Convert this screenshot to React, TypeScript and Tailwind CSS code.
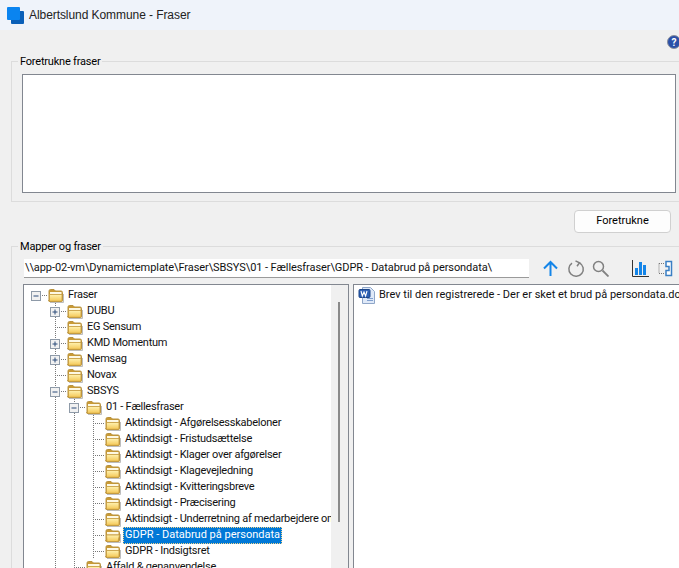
import type { ReactNode } from "react";

function Folder({ open }: { open?: boolean }) {
  return (
    <svg width="16" height="15" viewBox="0 0 16 15" className="shrink-0">
      <defs>
        <linearGradient id="folderFront" x1="0" y1="0" x2="0" y2="1">
          <stop offset="0" stopColor="#fff2b0" />
          <stop offset="1" stopColor="#f4c755" />
        </linearGradient>
      </defs>
      <path d="M2 14.5h13.5V6" fill="none" stroke="#bdbdbd" />
      <path d="M1 12.5V3q0-1.5 1.5-1.5H6L7.5 3H13q1.5 0 1.5 1.5v8q0 1-1 1h-11.5q-1.5 0-1.5-1z" fill="#c99a35" stroke="#b8923f" />
      <rect x="2" y="4" width="11.5" height="2.5" fill="#fdf8e4" />
      <path d={open ? "M1.5 7h13l-1.5 6.5H2z" : "M1.5 6.5h12.5v6q0 .8-.8.8H2.3q-.8 0-.8-.8z"} fill="url(#folderFront)" stroke="#c49a3f" strokeWidth="0.8" />
    </svg>
  );
}

function WordIcon() {
  return (
    <svg width="18" height="17" viewBox="0 0 18 17" className="shrink-0">
      <path d="M4.5 .5h8l4 4v12h-12z" fill="#dfe9f8" stroke="#8fa6c8" />
      <path d="M9 11.5h6M9 13.5h6" stroke="#7f9fcf" />
      <rect x="1" y="2.5" width="11" height="8" rx="1" fill="#2b5fb3" stroke="#1d4689" />
      <path d="M3 4l1.3 5 1.7-4 1.6 4 1.4-5" fill="none" stroke="#fff" strokeWidth="1.1" />
    </svg>
  );
}

function Connector({ guides, expander, branch, stub }: { guides: number[]; expander?: "plus" | "minus"; branch: number; stub: number }) {
  return (
    <svg width={stub} height="16" className="shrink-0">
      {guides.map((x) => (
        <line key={x} x1={x + 0.5} y1="0" x2={x + 0.5} y2="16" stroke="#777" strokeDasharray="1 1" />
      ))}
      <line x1={branch} y1="8.5" x2={stub} y2="8.5" stroke="#777" strokeDasharray="1 1" />
      {expander && (
        <g>
          <rect x={branch - 4.5} y="4.5" width="9" height="9" fill="#f1f1f1" stroke="#8e9aa8" />
          <line x1={branch - 2.5} y1="9" x2={branch + 2.5} y2="9" stroke="#2b4a78" />
          {expander === "plus" && <line x1={branch} y1="6.5" x2={branch} y2="11.5" stroke="#2b4a78" />}
        </g>
      )}
    </svg>
  );
}

type Node = { label: string; depth: number; expander?: "plus" | "minus"; guides: number[]; selected?: boolean };

// x values are relative to the left edge of the tree
const nodes: Node[] = [
  { label: "Fraser", depth: 0, expander: "minus", guides: [] },
  { label: "DUBU", depth: 1, expander: "plus", guides: [31] },
  { label: "EG Sensum", depth: 1, guides: [31] },
  { label: "KMD Momentum", depth: 1, expander: "plus", guides: [31] },
  { label: "Nemsag", depth: 1, expander: "plus", guides: [31] },
  { label: "Novax", depth: 1, guides: [31] },
  { label: "SBSYS", depth: 1, expander: "minus", guides: [31] },
  { label: "01 - Fællesfraser", depth: 2, expander: "minus", guides: [31, 50] },
  { label: "Aktindsigt - Afgørelsesskabeloner", depth: 3, guides: [31, 50, 69] },
  { label: "Aktindsigt - Fristudsættelse", depth: 3, guides: [31, 50, 69] },
  { label: "Aktindsigt - Klager over afgørelser", depth: 3, guides: [31, 50, 69] },
  { label: "Aktindsigt - Klagevejledning", depth: 3, guides: [31, 50, 69] },
  { label: "Aktindsigt - Kvitteringsbreve", depth: 3, guides: [31, 50, 69] },
  { label: "Aktindsigt - Præcisering", depth: 3, guides: [31, 50, 69] },
  { label: "Aktindsigt - Underretning af medarbejdere om", depth: 3, guides: [31, 50, 69] },
  { label: "GDPR - Databrud på persondata", depth: 3, guides: [31, 50, 69], selected: true },
  { label: "GDPR - Indsigtsret", depth: 3, guides: [31, 50, 69] },
  { label: "Affald & genanvendelse", depth: 2, guides: [31, 50] },
];

function TreeRow({ node }: { node: Node }) {
  const branch = 12 + node.depth * 19;
  return (
    <div className="flex h-4 items-center">
      <Connector guides={node.guides} expander={node.expander} branch={branch} stub={branch + 12} />
      <Folder open={node.selected} />
      {node.selected ? (
        <span className="ml-[2px] flex h-[17px] items-center whitespace-nowrap border border-dotted border-[#f5d58a] bg-[#0078d7] px-px pt-px text-white">
          {node.label}
        </span>
      ) : (
        <span className="ml-1 whitespace-nowrap pt-px tracking-[-0.25px] text-[#111]">{node.label}</span>
      )}
    </div>
  );
}

function Group({ title, className, children }: { title: string; className: string; children: ReactNode }) {
  return (
    <fieldset className={`ml-[11px] border-y border-l border-[#dcdcdc] ${className}`}>
      <legend className="ml-[6px] px-0.5 leading-[14px] tracking-[-0.2px] text-black">
        <span className="block translate-y-px">{title}</span>
      </legend>
      {children}
    </fieldset>
  );
}

export default function App() {
  return (
    <div className="flex h-[568px] w-[679px] flex-col overflow-hidden bg-[#f0f0f0] font-['Roboto',Arial,sans-serif] text-[11px]">
      <div className="flex h-[30px] shrink-0 items-center bg-[#eff3fa] pl-[7px]">
        <svg width="17" height="17" viewBox="0 0 17 17" className="shrink-0">
          <rect x="4" y="4" width="13" height="13" rx="1" fill="#0a5fb8" />
          <rect x="0" y="0" width="13" height="13" rx="1" fill="#0a84f0" />
        </svg>
        <span className="ml-[5px] font-['Liberation_Sans',Arial,sans-serif] text-[12px] tracking-[-0.07px] text-[#222]">
          Albertslund Kommune - Fraser
        </span>
      </div>

      <div className="flex h-[24px] shrink-0 justify-end pt-[5px]">
        <svg width="14" height="14" viewBox="0 0 14 14" className="-mr-[2px]">
          <circle cx="7" cy="7" r="6.5" fill="#2b50a8" stroke="#8a8f9c" />
          <text x="7" y="10.5" textAnchor="middle" fontSize="10" fontWeight="700" fill="#fff">?</text>
        </svg>
      </div>

      <Group title="Foretrukne fraser" className="h-[148px] shrink-0 pt-[6px]">
        <div className="ml-[10px] mr-[3px] h-[119px] border border-[#828790] bg-white" />
      </Group>

      <div className="flex h-[37px] shrink-0 items-start justify-end pr-2 pt-[8px]">
        <button className="h-[23px] w-[97px] rounded-[4px] border border-[#d0d0d0] bg-[#fdfdfd] text-black">
          Foretrukne
        </button>
      </div>

      <Group title="Mapper og fraser" className="min-h-0 flex-1 border-b-0 pt-[6px]">
        <div className="flex h-[19px] items-center">
          <div className="ml-[12px] flex h-[19px] w-[505px] shrink-0 items-center whitespace-nowrap border-b border-[#9a9a9a] bg-white pl-px tracking-[-0.08px] text-[#111]">
            \\app-02-vm\Dynamictemplate\Fraser\SBSYS\01 - Fællesfraser\GDPR - Databrud på persondata\
          </div>
          <div className="ml-[13px] flex items-center">
            <svg width="17" height="17" viewBox="0 0 17 17">
              <path d="M8.5 16V2M2 8.5l6.5-6.5L15 8.5" fill="none" stroke="#1485e8" strokeWidth="2" />
            </svg>
            <svg width="18" height="18" viewBox="0 0 18 18" className="ml-[8px]">
              <path d="M5 3.2A7.2 7.2 0 1 0 12.5 2.8" fill="none" stroke="#808080" strokeWidth="1.5" />
              <path d="M8.5 .8l4 2-2.5 3.4" fill="none" stroke="#808080" strokeWidth="1.5" />
            </svg>
            <svg width="17" height="17" viewBox="0 0 17 17" className="ml-[7px]">
              <circle cx="6.5" cy="6.5" r="5" fill="none" stroke="#808080" strokeWidth="1.5" />
              <path d="M10.5 10.5l6 6" stroke="#808080" strokeWidth="1.8" />
            </svg>
            <svg width="17" height="17" viewBox="0 0 17 17" className="ml-[23px]">
              <path d="M.5 0v16.5H17" fill="none" stroke="#333" />
              <path d="M3 8h3v7H3zM7 2h3v13H7zM11 5h3v10h-3z" fill="#1485e8" />
            </svg>
            <svg width="15" height="17" viewBox="0 0 15 17" className="ml-[9px]">
              <path d="M1 3.5h6M1 3.5v10h6" fill="none" stroke="#777" strokeDasharray="1 1" />
              <path d="M8 1.5h5.5v14H8v-5h3v-4H8z" fill="#fff" stroke="#3a7fc4" strokeWidth="1.5" />
            </svg>
          </div>
        </div>

        <div className="mt-[6px] flex h-[300px]">
          <div className="ml-[11px] flex h-full w-[326px] shrink-0 overflow-hidden border border-b-0 border-[#828790] bg-white">
            <div className="min-w-0 flex-1 overflow-hidden pt-[2px]">
              {nodes.map((n) => (
                <TreeRow key={n.label} node={n} />
              ))}
            </div>
            <div className="w-[17px] shrink-0 bg-[#f0f0f0] pl-[7px] pt-[17px]">
              <div className="h-[220px] w-[2px] bg-[#8a8a8a]" />
            </div>
          </div>
          <div className="ml-1 mr-[3px] h-full min-w-0 flex-1 overflow-hidden border border-b-0 border-[#828790] bg-white">
            <div className="flex items-center pl-1 pt-[2px]">
              <WordIcon />
              <span className="ml-[3px] whitespace-nowrap text-[#111]">Brev til den registrerede - Der er sket et brud på persondata.docx</span>
            </div>
          </div>
        </div>
      </Group>
    </div>
  );
}
